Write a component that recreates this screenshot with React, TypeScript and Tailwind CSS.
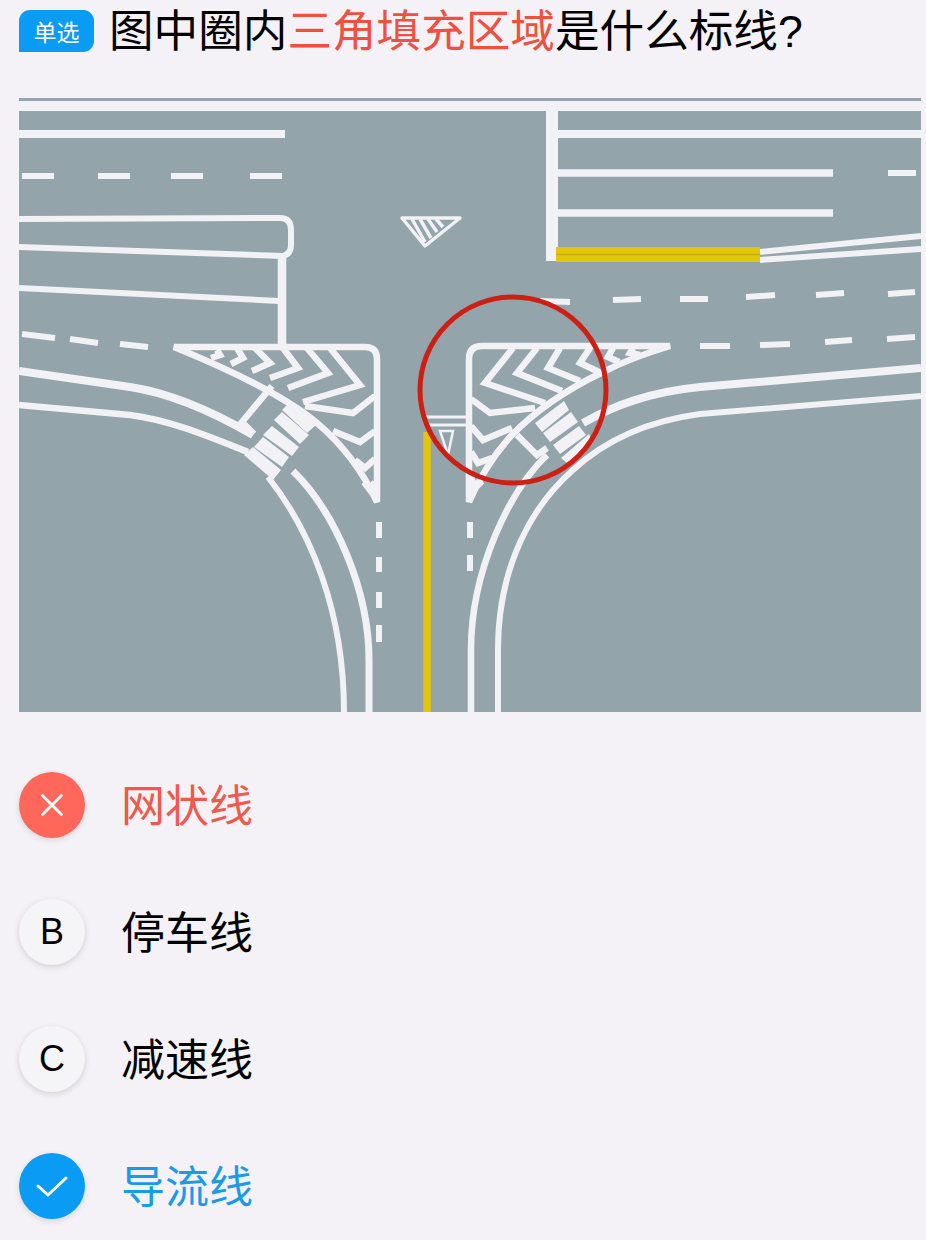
const CJK = 'font-["Noto_Sans_CJK_SC","Noto_Sans",sans-serif]'

const MARK = '#f1f1f6'
const YELLOW = '#e2c60a'

// chevron strokes on the two islands, page coordinates
const LEFT_CHEVRONS = [
  '330,348 360,385 303,402',
  '307,348 328,373 288,388',
  '283,348 298,368 270,378',
  '255,348 270,363 252,371',
  '237,348 243,358 231,364',
  '217,350 220,355 211,358',
  '375,396 353,413 305,406',
  '375,431 360,442 333,431',
  '375,459 365,468 355,460',
  '375,482 370,490 364,482',
]

const RIGHT_CHEVRONS = [
  '513,348 485,383 545,403',
  '537,348 517,373 562,391',
  '560,348 548,368 580,381',
  '590,348 580,363 599,372',
  '613,348 608,357 619,362',
  '633,348 630,353 640,355',
  '471,399 490,413 535,408',
  '471,426 483,440 512,428',
  '471,452 478,463 492,458',
  '471,477 475,488 482,481',
]

const LEFT_BARS = [
  '282,410 290,402 316,425 307,433',
  '274,420 282,412 309,435 300,444',
  '263,435 272,426 299,447 292,456',
  '254,447 263,437 289,457 282,467',
  '244,455 253,447 281,470 273,480',
]

const RIGHT_BARS = [
  '535,423 564,401 569,410 542,432',
  '543,433 571,412 578,422 550,442',
  '553,445 579,426 586,435 560,454',
  '561,458 589,434 593,443 568,464',
]

const DASHES = [
  [22, 176, 54, 176], [98, 176, 130, 176], [171, 176, 203, 176], [250, 176, 282, 176],
  [22, 334, 55, 338], [70, 339, 98, 343], [120, 344, 148, 347],
  [540, 301, 570, 302], [613, 300, 641, 299], [680, 299, 708, 299], [746, 297, 775, 295],
  [816, 295, 844, 293], [888, 294, 915, 292], [888, 173, 916, 173],
  [700, 346, 730, 346], [760, 345, 790, 344], [825, 342, 852, 340], [887, 339, 915, 337],
  [379, 522, 379, 538], [379, 557, 379, 572], [379, 592, 379, 608], [379, 625, 379, 642],
  [470, 522, 470, 538], [470, 555, 470, 571],
]

function RoadDiagram() {
  return (
    <svg viewBox="19 98 902 614" className="block h-[614px] w-[902px]" fill="none" stroke={MARK}>
      <rect x="19" y="98" width="902" height="614" fill="#93a4ab" stroke="none" />
      <rect x="19" y="101" width="902" height="10" fill={MARK} stroke="none" />

      {/* left arm */}
      <path d="M19 134H285" strokeWidth="8" />
      <path d="M19 219L280 218Q291 218 291 230V245Q291 254 283 256L19 247" strokeWidth="6" />
      <path d="M19 288L279 301" strokeWidth="6" />
      <path d="M282 257V347" strokeWidth="8.5" />

      {/* right arm */}
      <path d="M552 101V261" strokeWidth="12" />
      <path d="M558 134H921" strokeWidth="8" />
      <path d="M558 173H833M558 213H833" strokeWidth="7.5" />
      <path d="M760 252L921 236M760 260L921 249" strokeWidth="6" />
      <rect x="556" y="247" width="204" height="15" fill={YELLOW} stroke="none" />
      <path d="M556 254.5H760" stroke="#c9b012" strokeWidth="1.5" />

      {DASHES.map(([x1, y1, x2, y2], i) => (
        <line key={i} x1={x1} y1={y1} x2={x2} y2={y2} strokeWidth="6" />
      ))}

      {/* yield triangle */}
      <path d="M402 218H460L425 246Z" strokeWidth="3.5" strokeLinejoin="round" />
      <path d="M412 219L425 242M420 219L431 238M428 219L437 232M436 219L443 227" strokeWidth="3.5" />

      {/* left island */}
      <path d="M174 347H365Q377 347 377 359V502Q355 455 317 423Q275 388 174 347Z" strokeWidth="6.5" />
      {LEFT_CHEVRONS.map((p) => (
        <polyline key={p} points={p} strokeWidth="6.5" />
      ))}
      {LEFT_BARS.map((p) => (
        <polygon key={p} points={p} fill={MARK} stroke="none" />
      ))}
      <path d="M272 386L242 422L254 434" strokeWidth="6.5" />

      {/* right island */}
      <path d="M670 346H482Q469 346 469 359V502Q485 465 510 437Q545 400 603 372Q630 358 670 346Z" strokeWidth="6.5" />
      {RIGHT_CHEVRONS.map((p) => (
        <polyline key={p} points={p} strokeWidth="6.5" />
      ))}
      {RIGHT_BARS.map((p) => (
        <polygon key={p} points={p} fill={MARK} stroke="none" />
      ))}
      <path d="M517 435L537 455L547 448" strokeWidth="6.5" />

      {/* curbs and lane edges, left */}
      <path d="M19 371L130 387C170 393 215 413 253 435" strokeWidth="8" />
      <path d="M19 405L130 415C170 420 210 437 248 452" strokeWidth="6.5" />
      <path d="M293 471C335 512 369 590 369 660V712" strokeWidth="7" />
      <path d="M268 477C310 530 344 610 344 712" strokeWidth="6" />

      {/* curbs and lane edges, right */}
      <path d="M921 368L700 387C650 392 615 405 583 423" strokeWidth="8" />
      <path d="M921 396L700 414C640 422 600 445 573 470C533 505 498 565 498 650V712" strokeWidth="6" />
      <path d="M547 455C510 490 471 570 471 650V712" strokeWidth="6.5" />

      {/* centre line and stop marks */}
      <path d="M427 432V712" stroke={YELLOW} strokeWidth="7.5" />
      <path d="M425 417H468M425 425H468" strokeWidth="3" />
      <path d="M440 431H453L448 455Z" strokeWidth="2.5" />

      <circle cx="513" cy="390" r="93" stroke="#cc2015" strokeWidth="5" />
    </svg>
  )
}

function OptionRow({ mark, label, tone }: { mark: React.ReactNode; label: string; tone: string }) {
  return (
    <div className="flex h-[66px] items-center gap-[36px]">
      {mark}
      <span className={`-mt-[5px] text-[44px] leading-[56px] ${tone} ${CJK}`}>{label}</span>
    </div>
  )
}

function LetterMark({ letter }: { letter: string }) {
  return (
    <div className='flex h-[66px] w-[66px] items-center justify-center rounded-full bg-[#f5f4f7] font-["Liberation_Sans",sans-serif] text-[36px] text-black shadow-[0_2px_6px_rgba(0,0,0,0.14)]'>
      {letter}
    </div>
  )
}

export default function App() {
  return (
    <div className="h-[1240px] w-[926px] overflow-hidden bg-[#f4f2f6] pl-[19px]">
      <div className="flex h-[98px] items-start pt-[10px]">
        <div className={`flex h-[42px] w-[75px] items-center justify-center rounded-t-[11px] rounded-br-[11px] bg-[#0a9bf5] text-[23px] text-white ${CJK}`}>
          单选
        </div>
        <h1 className='-mt-[6px] ml-[15px] font-["Liberation_Sans","Noto_Sans_CJK_SC",sans-serif] text-[44.6px] leading-[56px] font-normal whitespace-nowrap text-black'>
          图中圈内<span className="text-[#f0503f]">三角填充区域</span>是什么标线?
        </h1>
      </div>

      <RoadDiagram />

      <div className="mt-[60px] flex flex-col gap-[61px]">
        <OptionRow
          tone="text-[#f0594c]"
          label="网状线"
          mark={
            <div className="flex h-[66px] w-[66px] items-center justify-center rounded-full bg-[#ff675b] shadow-[0_2px_6px_rgba(0,0,0,0.12)]">
              <svg width="24" height="24" viewBox="0 0 24 24" fill="none" stroke="#fff" strokeWidth="2.8" strokeLinecap="round">
                <path d="M2.5 2.5L21.5 21.5M21.5 2.5L2.5 21.5" />
              </svg>
            </div>
          }
        />
        <OptionRow tone="text-black" label="停车线" mark={<LetterMark letter="B" />} />
        <OptionRow tone="text-black" label="减速线" mark={<LetterMark letter="C" />} />
        <OptionRow
          tone="text-[#1a9be8]"
          label="导流线"
          mark={
            <div className="flex h-[66px] w-[66px] items-center justify-center rounded-full bg-[#0a9bf5] shadow-[0_2px_6px_rgba(0,0,0,0.12)]">
              <svg width="34" height="24" viewBox="0 0 34 24" fill="none" stroke="#fff" strokeWidth="3" strokeLinecap="round" strokeLinejoin="round">
                <path d="M3 12L13 21L31 4" />
              </svg>
            </div>
          }
        />
      </div>
    </div>
  )
}
